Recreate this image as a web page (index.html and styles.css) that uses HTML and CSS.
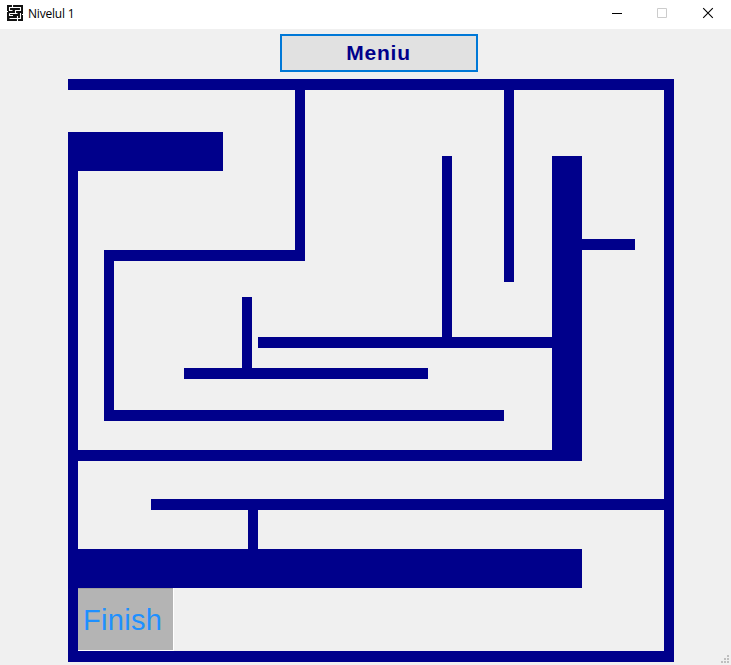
FILE: index.html
```html
<!DOCTYPE html>
<html lang="ro">
<head>
<meta charset="utf-8">
<title>Nivelul 1</title>
<link rel="stylesheet" href="styles.css">
</head>
<body>
<div class="window">
  <header class="titlebar">
    <svg class="app-icon" width="16" height="16" viewBox="0 0 16 16">
      <rect width="16" height="16" fill="#111"/>
      <path d="M5.5 0V2.5H2.5V5.5H5.5M5.5 2.5H13.5V5.5H8.5V8.5M2.5 8.5H10.5M2.5 8.5V10.5H6M13.5 8V13.5H10.5V16M10.5 11V13.5H2.5M0 6.5H1M15 9.5H16" fill="none" stroke="#fff" stroke-width="1.1"/>
    </svg>
    <span class="title">Nivelul 1</span>
    <div class="controls">
      <svg width="46" height="28" viewBox="0 0 46 28"><path d="M19 13.5H29" stroke="#000"/></svg>
      <svg width="46" height="28" viewBox="0 0 46 28"><path d="M18.5 8.5H27.5V17.5H18.5Z" fill="none" stroke="#ccc"/></svg>
      <svg width="46" height="28" viewBox="0 0 46 28"><path d="M18.2 8.2L27.8 17.8M27.8 8.2L18.2 17.8" stroke="#000" stroke-width="1.1"/></svg>
    </div>
  </header>
  <main class="client">
    <button class="menu-button">Meniu</button>
    <div class="maze">
      <svg class="walls" width="606" height="583" viewBox="68 79 606 583" shape-rendering="crispEdges">
        <rect x="68" y="79" width="606" height="11"/>
        <rect x="664" y="79" width="10" height="583"/>
        <rect x="68" y="651" width="606" height="11"/>
        <rect x="68" y="132" width="10" height="530"/>
        <rect x="68" y="132" width="155" height="39"/>
        <rect x="295" y="79" width="10" height="182"/>
        <rect x="104" y="250" width="201" height="11"/>
        <rect x="104" y="250" width="10" height="171"/>
        <rect x="104" y="410" width="400" height="11"/>
        <rect x="242" y="297" width="10" height="82"/>
        <rect x="184" y="368" width="244" height="11"/>
        <rect x="258" y="337" width="300" height="11"/>
        <rect x="442" y="156" width="10" height="190"/>
        <rect x="504" y="79" width="10" height="203"/>
        <rect x="552" y="156" width="30" height="305"/>
        <rect x="582" y="239" width="53" height="11"/>
        <rect x="68" y="450" width="514" height="11"/>
        <rect x="151" y="499" width="520" height="11"/>
        <rect x="248" y="505" width="10" height="50"/>
        <rect x="68" y="549" width="514" height="39"/>
      </svg>
      <div class="finish">Finish</div>
    </div>
    <svg class="grip" width="8" height="8" viewBox="0 0 8 8" shape-rendering="crispEdges">
      <path d="M6 0h2v2h-2zM3 3h2v2h-2zM6 3h2v2h-2zM0 6h2v2h-2zM3 6h2v2h-2zM6 6h2v2h-2z" fill="#bfbfbf"/>
    </svg>
  </main>
</div>
</body>
</html>
```
FILE: styles.css
```css
* {
  box-sizing: border-box;
}

body {
  margin: 0;
  overflow: hidden;
}

.window {
  height: 665px;
  display: flex;
  flex-direction: column;
  background: #f0f0f0;
}

.titlebar {
  height: 29px;
  flex: none;
  display: flex;
  align-items: flex-start;
  padding-left: 7px;
  background: #fff;
}

.app-icon {
  margin-top: 5px;
}

.title {
  margin-left: 5px;
  font: 12px/28px "Open Sans", "Noto Sans", sans-serif;
  letter-spacing: -0.2px;
  color: #000;
}

.controls {
  display: flex;
  margin-left: auto;
}

.client {
  position: relative;
  flex: 1;
  padding: 5px 57px 0 68px;
}

.menu-button {
  display: block;
  width: 198px;
  height: 38px;
  margin: 0 0 7px 212px;
  padding: 0 1px 0 0;
  border: 2px solid #0078d7;
  background: #e1e1e1;
  color: #00008b;
  font: bold 21px "Liberation Sans", sans-serif;
  letter-spacing: 0.8px;
}

.maze {
  position: relative;
  width: 606px;
  height: 583px;
}

.walls {
  display: block;
  fill: #00008b;
}

.finish {
  position: absolute;
  left: 10px;
  top: 509px;
  width: 96px;
  height: 63px;
  padding-left: 5px;
  border: solid #fff;
  border-width: 0 1px 1px 0;
  box-shadow: inset 0 1px #a0a0a0;
  background: #b4b4b4;
  color: #1e90ff;
  font: 29px/64px "Liberation Sans", sans-serif;
  letter-spacing: 0.3px;
}

.grip {
  position: absolute;
  right: 2px;
  bottom: 2px;
}
```
